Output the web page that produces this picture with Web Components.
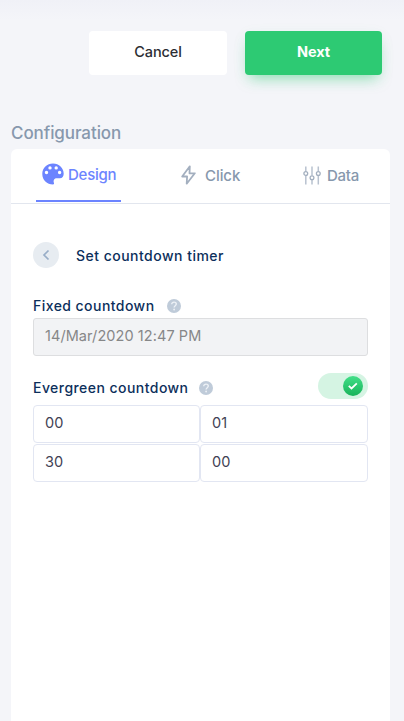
<!DOCTYPE html>
<html lang="en">
<head>
<meta charset="utf-8">
<title>Configuration</title>
<style>
  body {
    background: #f4f5f9;
    font-family: Inter, "Open Sans", sans-serif;
    height: 721px;
    margin: 0;
    overflow: hidden;
  }
</style>
</head>
<body>
<config-page></config-page>

<script>
class ActionButton extends HTMLElement {
  constructor() {
    super();
    this.root = this.attachShadow({mode: 'open'});
    this.root.innerHTML = `
    <style>
      :host {
        display: block;
        width: 138px;
      }

      :host([primary]) {
        width: 137px;
      }

      button {
        background: white;
        border: none;
        border-radius: 4px;
        color: #2b2d33;
        display: block;
        font: 500 14.5px/20px Inter, sans-serif;
        height: 44px;
        letter-spacing: -0.1px;
        padding: 0 0 2px;
        width: 100%;
      }

      :host([primary]) button {
        background: #2dca73;
        box-shadow: 0 8px 14px -5px rgba(45, 202, 115, 0.5), 0 4px 16px rgba(45, 202, 115, 0.06);
        color: white;
        font-weight: 700;
      }
    </style>
    <button><slot></slot></button>`;
  }
}
customElements.define('action-button', ActionButton);

const ICONS = {
  palette: `<svg width="22" height="22" viewBox="0 0 22 22"><path fill="#6c84ff" fill-rule="evenodd" d="M11 .5C5 .5.3 5 .3 11S5 21.500 11 21.500c1 0 1.200-.8.9-1.700-.8-2.600.4-4.600 3-4.600h3c2.400 0 3.800-1.900 3.800-4.500C21.700 4.900 17 .5 11 .5zM4.500 7.800a1.700 1.700 0 1 1 0 3.400 1.700 1.700 0 0 1 0-3.400zM8 3.200a1.700 1.700 0 1 1 0 3.400 1.700 1.700 0 0 1 0-3.400zm6.200 0a1.700 1.700 0 1 1 0 3.400 1.700 1.700 0 0 1 0-3.400zm3.400 4.600a1.700 1.700 0 1 1 0 3.400 1.700 1.700 0 0 1 0-3.400z"/></svg>`,
  bolt: `<svg width="15" height="20" viewBox="0 0 15 20"><path fill="none" stroke="#a3afbf" stroke-width="1.800" stroke-linejoin="round" d="M8.800 1.300 1.200 11.500h4.900L5.700 18.700 13.800 8.300H8.500z"/></svg>`,
  sliders: `<svg width="18" height="19" viewBox="0 0 18 19"><g fill="none" stroke="#b8c2cf" stroke-width="1.500"><path d="M2.800.5v4.800m0 4.400v8.800M9 .5v9m0 4.400v4.600M15.300.5v4.800m0 4.400v8.800"/><g stroke="#a3afbf" stroke-width="1.300"><circle cx="2.800" cy="7.500" r="1.900"/><circle cx="9" cy="11.700" r="1.900"/><circle cx="15.300" cy="7.500" r="1.900"/></g></g></svg>`
};

class TabItem extends HTMLElement {
  constructor() {
    super();
    this.root = this.attachShadow({mode: 'open'});
    this.root.innerHTML = `
    <style>
      :host {
        align-items: center;
        box-sizing: border-box;
        color: #8798ad;
        display: flex;
        font-size: 15px;
        font-weight: 500;
        height: 52px;
        letter-spacing: -0.1px;
        line-height: 20px;
      }

      :host([active]) {
        border-bottom: 2px solid #6c84ff;
        color: #6c84ff;
        letter-spacing: -0.25px;
        padding: 0 5px 0 6px;
      }

      svg {
        display: block;
        margin-right: 5px;
      }

      :host([icon="bolt"]) {
        margin-right: 3px;
      }

      :host([icon="bolt"]) svg {
        margin: 0 9px 2px 0;
      }

      :host([icon="sliders"]) {
        letter-spacing: -0.25px;
      }

      :host([icon="sliders"]) svg {
        margin: 0 6px 2px 0;
      }

      :host([active]) svg {
        margin: 0 4px 3px 0;
      }
    </style>
    ${ICONS[this.getAttribute('icon')]}<span><slot></slot></span>`;
  }
}
customElements.define('tab-item', TabItem);

class HelpDot extends HTMLElement {
  constructor() {
    super();
    this.root = this.attachShadow({mode: 'open'});
    this.root.innerHTML = `
    <style>
      :host {
        display: block;
        height: 14px;
        width: 14px;
      }

      svg {
        display: block;
      }
    </style>
    <svg width="14" height="14" viewBox="0 0 14 14">
      <circle cx="7" cy="7" r="7" fill="#bfcbd9"/>
      <path fill="none" stroke="#edf1f6" stroke-width="1.400" d="M4.700 5.200c0-1.300 1-2.100 2.300-2.100s2.300.8 2.300 2c0 1.600-2.200 1.600-2.200 3.400"/>
      <circle cx="7.100" cy="10.500" r=".9" fill="#edf1f6"/>
    </svg>`;
  }
}
customElements.define('help-dot', HelpDot);

class FieldLabel extends HTMLElement {
  constructor() {
    super();
    this.root = this.attachShadow({mode: 'open'});
    this.root.innerHTML = `
    <style>
      :host {
        align-items: center;
        color: #0c2f5b;
        display: flex;
        font-size: 14px;
        font-weight: 500;
        gap: 11px;
        letter-spacing: 0.45px;
        line-height: 20px;
      }
    </style>
    <span><slot></slot></span><help-dot></help-dot>`;
  }
}
customElements.define('field-label', FieldLabel);

class TextField extends HTMLElement {
  constructor() {
    super();
    this.root = this.attachShadow({mode: 'open'});
    this.root.innerHTML = `
    <style>
      :host {
        background: white;
        border: 1px solid #e2e6f2;
        border-radius: 4px;
        box-sizing: border-box;
        color: #3f4254;
        display: block;
        font-size: 14.5px;
        height: 38px;
        letter-spacing: 0.07px;
        line-height: 20px;
        padding: 7px 11px;
      }

      :host([disabled]) {
        background: #f2f3f5;
        border-color: #dddee0;
        border-radius: 3px;
        color: #868788;
      }
    </style>
    <slot></slot>`;
  }
}
customElements.define('text-field', TextField);

class ToggleSwitch extends HTMLElement {
  constructor() {
    super();
    this.root = this.attachShadow({mode: 'open'});
    this.root.innerHTML = `
    <style>
      :host {
        background: #d5f4e3;
        border-radius: 13px;
        box-sizing: border-box;
        display: flex;
        height: 26px;
        justify-content: flex-end;
        padding: 3px 5px;
        width: 50px;
      }

      .knob {
        background: linear-gradient(#42df88, #18b35a);
        border-radius: 50%;
        height: 20px;
        width: 20px;
      }
    </style>
    <div class="knob">
      <svg width="20" height="20" viewBox="0 0 20 20"><path fill="none" stroke="white" stroke-width="1.800" d="m5.800 9.800 2.700 2.600 5.300-5"/></svg>
    </div>`;
  }
}
customElements.define('toggle-switch', ToggleSwitch);

class CountdownForm extends HTMLElement {
  constructor() {
    super();
    this.root = this.attachShadow({mode: 'open'});
    this.root.innerHTML = `
    <style>
      :host {
        display: block;
        padding: 38px 22px 0;
      }

      .heading {
        align-items: center;
        color: #0c2f5b;
        display: flex;
        font-size: 14px;
        font-weight: 500;
        gap: 17px;
        letter-spacing: 0.48px;
        line-height: 20px;
      }

      .heading span {
        padding-top: 2px;
      }

      .back {
        background: #e7ecf1;
        border-radius: 50%;
        height: 26px;
        width: 26px;
      }

      .back svg {
        display: block;
      }

      .fixed {
        gap: 12px;
        margin: 28px 0 2px;
      }

      .row {
        align-items: center;
        display: flex;
        justify-content: space-between;
        margin: 17px 0 6px;
      }

      .row field-label {
        padding-top: 4px;
      }

      .times {
        display: grid;
        grid-template-columns: 167px 168px;
        row-gap: 1px;
      }
    </style>
    <div class="heading">
      <div class="back">
        <svg width="26" height="26" viewBox="0 0 26 26"><path fill="none" stroke="#98adc7" stroke-width="1.700" d="m15.500 8.500-4.500 4.500 4.500 4.500"/></svg>
      </div>
      <span>Set countdown timer</span>
    </div>
    <field-label class="fixed">Fixed countdown</field-label>
    <text-field disabled>14/Mar/2020 12:47 PM</text-field>
    <div class="row">
      <field-label>Evergreen countdown</field-label>
      <toggle-switch></toggle-switch>
    </div>
    <div class="times">
      <text-field>00</text-field>
      <text-field>01</text-field>
      <text-field>30</text-field>
      <text-field>00</text-field>
    </div>`;
  }
}
customElements.define('countdown-form', CountdownForm);

class ConfigPage extends HTMLElement {
  constructor() {
    super();
    this.root = this.attachShadow({mode: 'open'});
    this.root.innerHTML = `
    <style>
      :host {
        background: linear-gradient(#f0f1f7, #f4f5f9 20px);
        box-sizing: border-box;
        display: flex;
        flex-direction: column;
        height: 721px;
        padding: 31px 14px 0 11px;
      }

      .actions {
        display: flex;
        gap: 18px;
        justify-content: flex-end;
        padding-right: 8px;
      }

      h1 {
        color: #8798ad;
        font-size: 17px;
        font-weight: 500;
        letter-spacing: -0.08px;
        line-height: 24px;
        margin: 46px 0 4px;
      }

      .card {
        background: white;
        border-radius: 6px 6px 0 0;
        flex: 1;
      }

      .tabs {
        border-bottom: 1px solid #e2e6ee;
        display: flex;
        justify-content: space-between;
        padding: 1px 31px 1px 25px;
      }
    </style>
    <div class="actions">
      <action-button>Cancel</action-button>
      <action-button primary>Next</action-button>
    </div>
    <h1>Configuration</h1>
    <div class="card">
      <div class="tabs">
        <tab-item icon="palette" active>Design</tab-item>
        <tab-item icon="bolt">Click</tab-item>
        <tab-item icon="sliders">Data</tab-item>
      </div>
      <countdown-form></countdown-form>
    </div>`;
  }
}
customElements.define('config-page', ConfigPage);
</script>
</body>
</html>
